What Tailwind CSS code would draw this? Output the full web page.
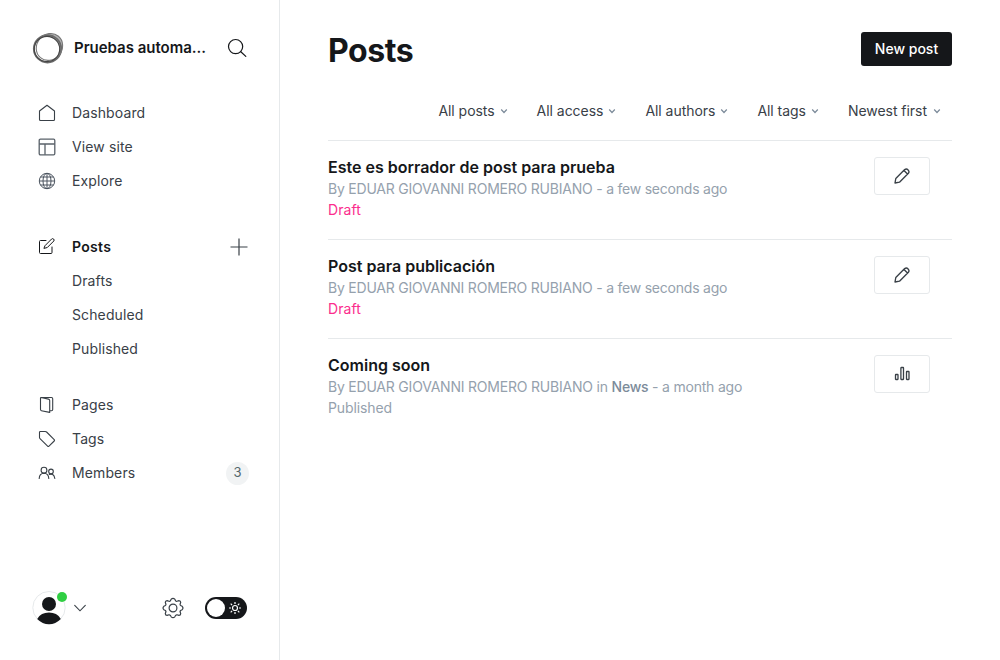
<!DOCTYPE html>
<html lang="en">
<head>
<meta charset="utf-8">
<title>Posts</title>
<script src="https://cdn.jsdelivr.net/npm/@tailwindcss/browser@4"></script>
</head>
<body class="flex h-[660px] w-[1000px] overflow-hidden bg-white font-['Inter',sans-serif] text-[14px] text-[#394047]">
<aside class="flex w-[280px] shrink-0 flex-col border-r border-[#e6e9eb]">
  <header class="flex h-8 mt-8 items-center pl-8 pr-8">
    <svg class="size-8" viewBox="0 0 32 32" fill="none">
      <path d="M12 3.200Q19-.3 25 3.200q6 4 5.800 12.300-.8 8-7.800 12 4.500-6 4.600-12Q25.500 5 12 3.200Z" fill="#b5b5b5"/>
      <circle cx="15.500" cy="16.800" r="13.700" stroke="#6a6a6a" stroke-width="1.800"/>
      <ellipse cx="17.300" cy="15.300" rx="14" ry="12.600" stroke="#777" stroke-width="1.100" transform="rotate(-50 17 15)"/>
      <ellipse cx="15" cy="17" rx="12.700" ry="12.600" stroke="#444" stroke-width="1.100"/>
    </svg>
    <h2 class="ml-[10px] w-[140px] whitespace-nowrap text-[15px] font-semibold leading-5 tracking-[-0.02px] text-[#15171a]">Pruebas automa...</h2>
    <svg class="ml-[13px] size-5 shrink-0" viewBox="0 0 20 20" fill="none" stroke="#15171a" stroke-width="1.200" stroke-linecap="round"><circle cx="8.600" cy="8.600" r="7.100"/><path d="m13.800 13.700 5 4.700"/></svg>
  </header>
  <nav class="mt-8 flex flex-col pl-[38px] pr-[31px] tracking-[0.12px]">
    <a class="flex h-[34px] items-center gap-4"><svg class="size-[18px]" viewBox="0 0 18 18" fill="none" stroke="#394047" stroke-width="1.100" stroke-linejoin="round"><path d="M1.500 7 9 1.200 16.500 7v8.500q0 1-1 1h-13q-1 0-1-1Z"/></svg><span class="pb-0.5">Dashboard</span></a>
    <a class="flex h-[34px] items-center gap-4"><svg class="size-[18px]" viewBox="0 0 18 18" fill="none" stroke="#596169" stroke-width="1.300"><rect x="1.200" y="1.200" width="15.600" height="15.600" rx="1.200"/><path d="M1.200 6h15.600M7 6v10.800"/></svg><span class="pb-0.5">View site</span></a>
    <a class="flex h-[34px] items-center gap-4"><svg class="size-[18px]" viewBox="0 0 18 18" fill="none" stroke="#4c5560"><circle cx="9" cy="9" r="7.700"/><ellipse cx="9" cy="9" rx="4" ry="7.700"/><path d="M9 1.300v15.400M1.300 9h15.400M2.500 5h13M2.500 13h13"/></svg><span class="pb-0.5">Explore</span></a>
    <a class="mt-8 flex h-[34px] items-center gap-4 font-semibold tracking-[0.3px] text-[#15171a]"><svg class="size-[18px]" viewBox="0 0 18 18" fill="none" stroke="#15171a" stroke-linecap="round" stroke-linejoin="round"><path d="M8 2.500H2.500q-1 0-1 1v11q0 1 1 1h10.500q1 0 1-1V9M7.200 7.500 13.600 1q1-.8 2 0 1 1 .2 2L9.300 9.500l-3 .8Z"/></svg><span class="pb-0.5">Posts</span><svg class="ml-auto size-[18px]" viewBox="0 0 18 18" fill="none" stroke="#394047" stroke-width="1.200"><path d="M9 .5v17M.5 9h17"/></svg></a>
    <a class="flex h-[34px] items-center pb-0.5 pl-[34px]">Drafts</a>
    <a class="flex h-[34px] items-center pb-0.5 pl-[34px]">Scheduled</a>
    <a class="flex h-[34px] items-center pb-0.5 pl-[34px]">Published</a>
    <a class="mt-[22px] flex h-[34px] items-center gap-4"><svg class="size-[18px]" viewBox="0 0 18 18" fill="none" stroke="#394047" stroke-width="1.100" stroke-linejoin="round"><path d="M3 1.500 10.500 3.100q1.200.3 1.200 1.300v12L3.400 14.700q-.9-.2-.9-1.100V2q0-.5.500-.5ZM3 1.500h10.500q1.200 0 1.200 1.200v10.900q0 1.200-1.200 1.200h-1.800"/></svg><span class="pb-0.5">Pages</span></a>
    <a class="flex h-[34px] items-center gap-4"><svg class="size-[18px]" viewBox="0 0 18 18" fill="none" stroke="#394047" stroke-width="1.100" stroke-linejoin="round"><path d="M1.500 2.300q0-.8.800-.8h5q.8 0 1.300.5l7.600 7.600q.7.700 0 1.400l-5.200 5.200q-.7.700-1.400 0L2 8.700q-.5-.5-.5-1.200Z"/></svg><span class="pb-0.5">Tags</span></a>
    <a class="flex h-[34px] items-center gap-4"><svg class="size-[18px]" viewBox="0 0 18 18" fill="none" stroke="#394047" stroke-width="1.100" stroke-linecap="round"><circle cx="6" cy="6.200" r="2.900"/><path d="M1.200 14.500q.2-5 4.800-5.200 4.500.2 4.800 5.200"/><circle cx="13" cy="7.400" r="2.300"/><path d="M11.300 10.500q4.700-1.500 5.500 4"/></svg><span class="pb-0.5">Members</span><span class="-mr-px ml-auto flex size-[23px] items-center justify-center rounded-full bg-[#f1f3f4] text-[13px] text-[#54666d]">3</span></a>
  </nav>
  <footer class="mt-auto mb-[34px] flex h-9 items-center pl-8">
    <div class="relative size-[34px]">
      <svg class="size-[34px]" viewBox="0 0 34 34"><circle cx="17" cy="16.700" r="16.200" fill="#fff" stroke="#e6e9eb"/><circle cx="17" cy="13" r="7" fill="#15171a"/><path d="M5.200 27.900Q9 21.600 17 21.600t11.800 6.300Q23.500 33.200 17 33.200T5.200 27.900Z" fill="#15171a"/></svg>
      <span class="absolute left-[25px] top-[1px] size-[10px] rounded-full bg-[#30cf43]"></span>
    </div>
    <svg class="ml-2 h-3 w-3" viewBox="0 0 12 12" fill="none" stroke="#394047" stroke-width="1.100" stroke-linecap="round"><path d="m.700 3.300 5.300 5.500 5.300-5.500"/></svg>
    <svg class="ml-[76px] size-[22px]" viewBox="0 0 22 22" fill="none" stroke="#394047" stroke-width="1.200" stroke-linejoin="round"><circle cx="11" cy="11" r="3.900"/><path d="M9.200 2.200q1.800-1.800 3.600 0l.9 1.700q.5.600 1.300.3l1.900-.6q1.700.1 1.800 1.800l-.6 1.900q-.1.800.5 1.200l1.600.8q1.500 1.700 0 3.400l-1.600.8q-.7.500-.5 1.300l.6 1.800q-.1 1.700-1.800 1.800l-1.900-.6q-.8-.1-1.300.5l-.9 1.500q-1.800 1.800-3.600 0l-.9-1.500q-.5-.600-1.300-.5l-1.900.6q-1.700-.1-1.800-1.800l.6-1.800q.200-.8-.5-1.300l-1.600-.8q-1.500-1.700 0-3.400l1.600-.8q.6-.4.500-1.200l-.6-1.900q.1-1.700 1.800-1.800l1.900.6q.8.300 1.300-.3Z"/></svg>
    <div class="ml-[21px] flex h-[22px] w-[42px] items-center rounded-full bg-[#15171a] pl-[2px]">
      <span class="size-[18px] rounded-full bg-white"></span>
      <svg class="ml-[4px] size-3" viewBox="0 0 12 12" fill="none" stroke="#fff" stroke-width="1.200"><circle cx="6" cy="6" r="2.500"/><path d="M6 0v2M6 10v2M0 6h2M10 6h2M1.700 1.700l1.400 1.400M8.900 8.900l1.400 1.400M1.700 10.300l1.400-1.400M8.900 3.100l1.400-1.400"/></svg>
    </div>
  </footer>
</aside>
<main class="flex flex-1 flex-col pl-12 pr-12">
  <header class="mt-8 flex h-[34px] items-center justify-between">
    <h1 class="mt-[3px] text-[32px] font-bold leading-9 tracking-[-0.45px] text-[#15171a]">Posts</h1>
    <button class="h-[34px] w-[91px] rounded-[3px] bg-[#15171a] pb-0.5 text-[14px] font-medium text-white">New post</button>
  </header>
  <div class="mt-[29px] flex h-[30px] items-center justify-end gap-[29px] pr-[11px] tracking-[-0.04px]">
    <span class="flex items-center gap-[5px]">All posts<svg class="mt-0.5 size-2" viewBox="0 0 8 8" fill="none" stroke="#7c8b9a" stroke-width="1.200"><path d="m1.200 2.500 2.800 3 2.800-3"/></svg></span>
    <span class="flex items-center gap-[5px]">All access<svg class="mt-0.5 size-2" viewBox="0 0 8 8" fill="none" stroke="#7c8b9a" stroke-width="1.200"><path d="m1.200 2.500 2.800 3 2.800-3"/></svg></span>
    <span class="flex items-center gap-[5px]">All authors<svg class="mt-0.5 size-2" viewBox="0 0 8 8" fill="none" stroke="#7c8b9a" stroke-width="1.200"><path d="m1.200 2.500 2.800 3 2.800-3"/></svg></span>
    <span class="flex items-center gap-[5px]">All tags<svg class="mt-0.5 size-2" viewBox="0 0 8 8" fill="none" stroke="#7c8b9a" stroke-width="1.200"><path d="m1.200 2.500 2.800 3 2.800-3"/></svg></span>
    <span class="flex items-center gap-[6px]">Newest first<svg class="mt-0.5 size-2" viewBox="0 0 8 8" fill="none" stroke="#7c8b9a" stroke-width="1.200"><path d="m1.200 2.500 2.800 3 2.800-3"/></svg></span>
  </div>
  <ul class="mt-[15px] text-[#95a1ad]">
    <li class="flex h-[99px] justify-between border-t border-[#e6e9eb] pr-[22px] pt-[15px]">
      <div class="leading-[21px]"><h3 class="text-[16px] font-semibold leading-[22px] text-[#15171a]">Este es borrador de post para prueba</h3><p class="tracking-[-0.22px]">By EDUAR GIOVANNI ROMERO RUBIANO - a few seconds ago</p><p class="tracking-[0.1px] text-[#fb2d8d]">Draft</p></div>
      <button class="mt-px flex h-[38px] w-14 items-center justify-center rounded-[3px] border border-[#e6e9eb]"><svg class="size-4" viewBox="0 0 16 16" fill="none" stroke="#394047" stroke-width="1.350" stroke-linejoin="round"><path d="m1 15 .8-4.500 8.900-8.900q1.800-1.300 3.400.3t.3 3.400L5.500 14.200ZM10 2.500l3.500 3.500"/></svg></button>
    </li>
    <li class="flex h-[99px] justify-between border-t border-[#e6e9eb] pr-[22px] pt-[15px]">
      <div class="leading-[21px]"><h3 class="text-[16px] font-semibold leading-[22px] text-[#15171a]">Post para publicación</h3><p class="tracking-[-0.22px]">By EDUAR GIOVANNI ROMERO RUBIANO - a few seconds ago</p><p class="tracking-[0.1px] text-[#fb2d8d]">Draft</p></div>
      <button class="mt-px flex h-[38px] w-14 items-center justify-center rounded-[3px] border border-[#e6e9eb]"><svg class="size-4" viewBox="0 0 16 16" fill="none" stroke="#394047" stroke-width="1.350" stroke-linejoin="round"><path d="m1 15 .8-4.500 8.900-8.900q1.800-1.300 3.400.3t.3 3.400L5.500 14.200ZM10 2.500l3.500 3.500"/></svg></button>
    </li>
    <li class="flex h-[99px] justify-between border-t border-[#e6e9eb] pr-[22px] pt-[15px]">
      <div class="leading-[21px]"><h3 class="text-[16px] font-semibold leading-[22px] text-[#15171a]">Coming soon</h3><p class="tracking-[-0.21px]">By EDUAR GIOVANNI ROMERO RUBIANO in <span class="font-medium text-[#7c8b9a]">News</span> - a month ago</p><p class="tracking-[-0.12px]">Published</p></div>
      <button class="mt-px flex h-[38px] w-14 items-center justify-center rounded-[3px] border border-[#e6e9eb]"><svg class="size-4" viewBox="0 0 16 16" fill="none" stroke="#394047" stroke-width="1.300"><rect x="1.500" y="8.500" width="2.500" height="5" rx=".4"/><rect x="6.900" y="1.500" width="2.600" height="12" rx=".4"/><rect x="12.500" y="5.500" width="2.500" height="8" rx=".4"/></svg></button>
    </li>
  </ul>
</main>
</body>
</html>
